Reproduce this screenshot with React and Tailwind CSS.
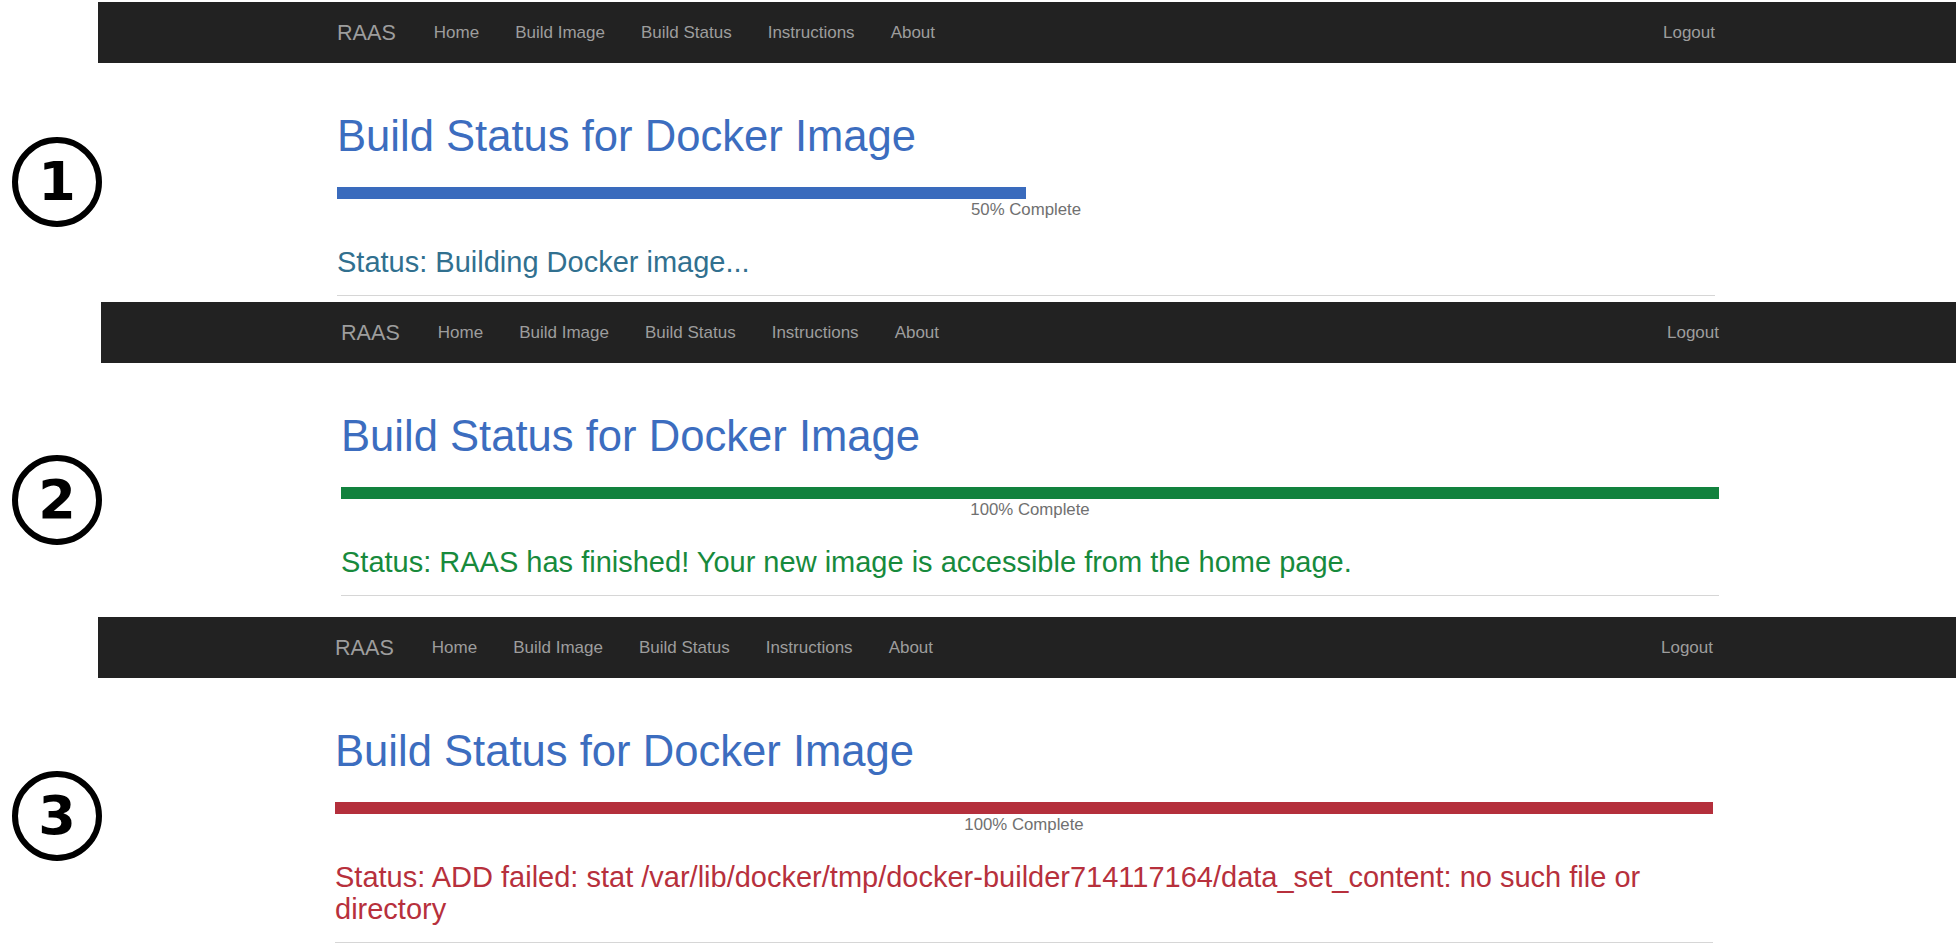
import React from 'react';

const links = ['Home', 'Build Image', 'Build Status', 'Instructions', 'About'];

const panels = [
  {
    n: '1',
    pct: 50,
    wrap: 'mt-0',
    side: 'w-[98px]',
    circle: 'mt-[137px]',
    navTop: 'mt-[2px]',
    inset: 'ml-[239px]',
    bar: 'bg-[#3a6bbd]',
    text: 'text-[#31708f]',
    status: 'Status: Building Docker image...',
  },
  {
    n: '2',
    pct: 100,
    wrap: 'mt-[6px]',
    side: 'w-[101px]',
    circle: 'mt-[153px]',
    navTop: 'mt-0',
    inset: 'ml-[240px]',
    bar: 'bg-[#12823e]',
    text: 'text-[#178a3c]',
    status: 'Status: RAAS has finished! Your new image is accessible from the home page.',
  },
  {
    n: '3',
    pct: 100,
    wrap: 'mt-[21px]',
    side: 'w-[98px]',
    circle: 'mt-[154px]',
    navTop: 'mt-0',
    inset: 'ml-[237px]',
    bar: 'bg-[#b42f3c]',
    text: 'text-[#b7303c]',
    status:
      'Status: ADD failed: stat /var/lib/docker/tmp/docker-builder714117164/data_set_content: no such file or directory',
  },
];

const Navbar = ({ inset }) => (
  <nav className="h-[61px] bg-[#222222] flex items-center">
    <div className={`w-[1378px] ${inset} flex items-center text-[#9d9d9d]`}>
      <span className="text-[21.6px] leading-none">RAAS</span>
      <ul className="ml-[38px] flex gap-[36px] text-[17px] leading-none">
        {links.map((l) => (
          <li key={l}>{l}</li>
        ))}
      </ul>
      <span className="ml-auto text-[17px] leading-none">Logout</span>
    </div>
  </nav>
);

const Marker = ({ n }) => (
  <div className="ml-[12px] w-[90px] h-[90px] rounded-full border-[6.5px] border-black flex items-center justify-center">
    <span className="font-['DejaVu_Sans',sans-serif] font-bold text-[54px] leading-none text-black">{n}</span>
  </div>
);

const App = () => {
  return (
    <div className="w-[1956px] min-h-[945px] bg-white font-['Liberation_Sans',Arial,sans-serif]">
      {panels.map((p) => (
        <div key={p.n} className={`flex ${p.wrap}`}>
          <div className={`${p.side} shrink-0`}>
            <div className={p.circle}>
              <Marker n={p.n} />
            </div>
          </div>
          <div className={`flex-1 min-w-0 ${p.navTop}`}>
            <Navbar inset={p.inset} />
            <div className={`w-[1378px] ${p.inset}`}>
              <h1 className="mt-[50px] text-[43.6px] leading-[47.5px] font-normal text-[#3c6dbf]">
                Build Status for Docker Image
              </h1>
              <div className="mt-[26px] h-[12px]">
                <div className={`h-full ${p.bar}`} style={{ width: `${p.pct}%` }} />
              </div>
              <div className="mt-[1px] text-center text-[16.8px] leading-[20px] text-[#707070]">
                {p.pct}% Complete
              </div>
              <h3 className={`mt-[27px] text-[29px] leading-[31.7px] font-normal ${p.text}`}>{p.status}</h3>
              <hr className="mt-[17px] border-0 border-t border-[#d6d6d6]" />
            </div>
          </div>
        </div>
      ))}
    </div>
  );
};

export default App;
